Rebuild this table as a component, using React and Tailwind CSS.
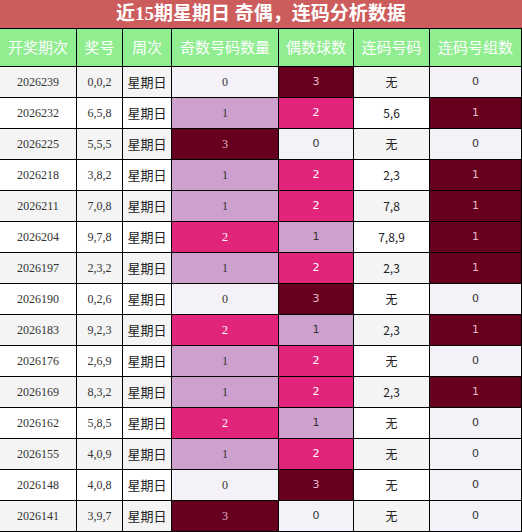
import React from "react";

const rows = [
  ["2026239", "0,0,2", 0, 3, "无", 0],
  ["2026232", "6,5,8", 1, 2, "5,6", 1],
  ["2026225", "5,5,5", 3, 0, "无", 0],
  ["2026218", "3,8,2", 1, 2, "2,3", 1],
  ["2026211", "7,0,8", 1, 2, "7,8", 1],
  ["2026204", "9,7,8", 2, 1, "7,8,9", 1],
  ["2026197", "2,3,2", 1, 2, "2,3", 1],
  ["2026190", "0,2,6", 0, 3, "无", 0],
  ["2026183", "9,2,3", 2, 1, "2,3", 1],
  ["2026176", "2,6,9", 1, 2, "无", 0],
  ["2026169", "8,3,2", 1, 2, "2,3", 1],
  ["2026162", "5,8,5", 2, 1, "无", 0],
  ["2026155", "4,0,9", 1, 2, "无", 0],
  ["2026148", "4,0,8", 0, 3, "无", 0],
  ["2026141", "3,9,7", 3, 0, "无", 0],
];

const heat = {
  0: "bg-[#f4f2f8] text-[#333]",
  1: "bg-[#cda0cd] text-[#333]",
  2: "bg-[#e0257b] text-white",
  3: "bg-[#67001f] text-[#e6b8cc]",
};

const headers = ["开奖期次", "奖号", "周次", "奇数号码数量", "偶数球数", "连码号码", "连码号组数"];

const serif = "font-['Liberation_Serif','Noto_Sans_CJK_SC',serif]";
const sans = "font-['DejaVu_Sans','Noto_Sans_CJK_SC',sans-serif]";
const cjk = "font-['Noto_Sans_CJK_SC',sans-serif]";

export default function App() {
  return (
    <div className="w-[522px] h-[532px] bg-white overflow-hidden">
      <div className={`h-[29px] bg-[#cd5c5c] border-b border-black flex items-center justify-center text-white text-[19px] font-bold ${serif}`}>
        近15期星期日 奇偶，连码分析数据
      </div>
      <div className="grid grid-cols-[76px_45px_48px_106px_74px_75px_91px] gap-px bg-black pr-px pb-px">
        {headers.map((h) => (
          <div key={h} className={`h-[37px] bg-[#90ee90] text-white text-[15px] flex items-center justify-center ${cjk}`}>
            {h}
          </div>
        ))}
        {rows.map((r, i) => {
          const zebra = i % 2 === 0 ? "bg-[#f4f4f4]" : "bg-white";
          const cell = "h-[30px] flex items-center justify-center";
          return (
            <React.Fragment key={r[0]}>
              <div className={`${cell} ${zebra} text-[12px] text-[#333] ${serif}`}>{r[0]}</div>
              <div className={`${cell} ${zebra} text-[12px] text-[#333] ${serif}`}>{r[1]}</div>
              <div className={`${cell} ${zebra} text-[13px] text-[#222] ${cjk}`}>星期日</div>
              <div className={`${cell} ${heat[r[2]]} text-[12px] ${serif}`}>{r[2]}</div>
              <div className={`${cell} ${heat[r[3]]} text-[11px] ${sans}`}>{r[3]}</div>
              <div className={`${cell} ${zebra} text-[12px] text-[#222] ${cjk}`}>{r[4]}</div>
              <div className={`${cell} ${r[5] ? heat[3] : heat[0]} text-[11px] ${sans}`}>{r[5]}</div>
            </React.Fragment>
          );
        })}
      </div>
    </div>
  );
}
